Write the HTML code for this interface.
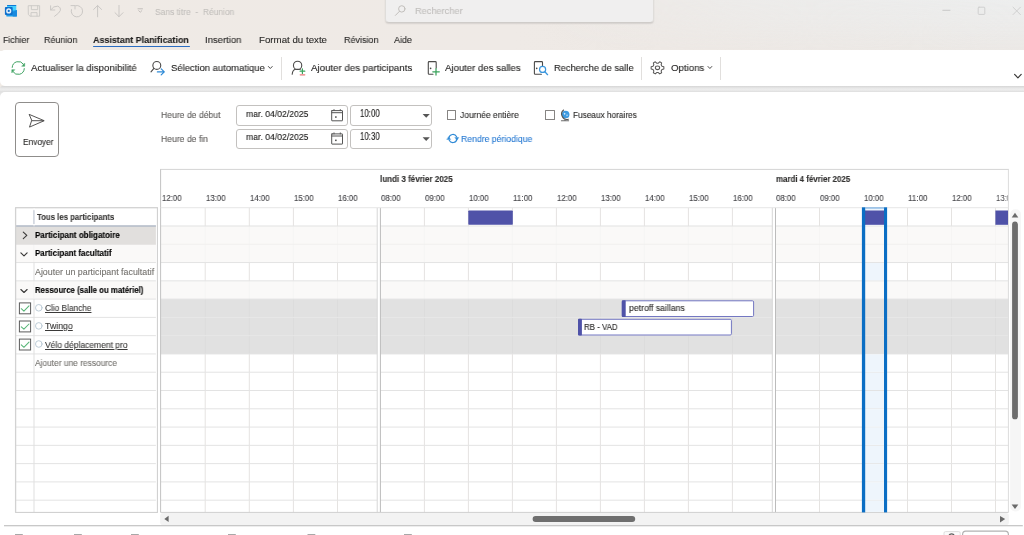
<!DOCTYPE html>
<html><head><meta charset="utf-8"><title>Sans titre - Réunion</title>
<style>
*{margin:0;padding:0;box-sizing:border-box;}
html,body{width:1024px;height:535px;overflow:hidden;background:#fff;font-family:"Liberation Sans",sans-serif;}
body{position:relative;}
.a{position:absolute;}
.t{will-change:transform;position:absolute;white-space:pre;line-height:1;transform-origin:0 0;display:inline-block;}
#title{left:0;top:0;width:1024px;height:51px;background:linear-gradient(90deg,#efeae5 0%,#efeae6 50%,#eee9e5 65%,#ece9e6 100%);}
#search{left:385.2px;top:-8px;width:268.6px;height:30.6px;border-radius:4px;background:#f0efef;border:1px solid #dfddda;border-bottom-color:#cfccc9;box-shadow:0 1px 1.5px rgba(0,0,0,.10);}
#tabul{left:93px;top:45.7px;width:96.8px;height:1.6px;background:#2a6dc2;border-radius:1px;}
#ribbon{left:0;top:50.3px;width:1024px;height:35.5px;background:#fff;border-radius:5px 0 0 5px;}
#band{left:0;top:85.8px;width:1024px;height:450px;background:linear-gradient(180deg,#d5d5d5 0px,#e3e3e3 1.6px,#ececec 3px,#ebebeb 4.2px,#e0e0e0 5.6px,#e4e4e4 7px);border-radius:3px 0 0 0;}
#bandL{left:0;top:78px;width:5px;height:10px;background:#efeae5;}
#content{left:0px;top:91.6px;width:1024px;height:445px;background:#fff;border-radius:5px 0 0 0;}
.sep{width:1px;background:#e1dfdd;top:57.2px;height:22.4px;}
#send{left:15.4px;top:102.4px;width:43.2px;height:54.8px;border:1px solid #8f8d8b;border-radius:4px;background:#fff;}
.inp{border:1px solid #c3c1bf;border-radius:3px;background:#fff;height:20.2px;}
.cb{width:9.7px;height:9.6px;border:1px solid #868482;background:#fff;border-radius:0.5px;}
svg{position:absolute;overflow:visible;}

.r{-webkit-text-stroke:0.12px currentColor;}
#titleR{left:540px;top:0;width:484px;height:51px;background:linear-gradient(180deg,rgba(236,237,237,1) 0%,rgba(236,237,237,.75) 40%,rgba(236,237,237,0) 100%);-webkit-mask-image:linear-gradient(90deg,transparent 0%,rgba(0,0,0,.55) 40%,#000 100%);mask-image:linear-gradient(90deg,transparent 0%,rgba(0,0,0,.55) 40%,#000 100%);}
.t{text-decoration-thickness:0.8px;text-underline-offset:1.2px;}
.b{-webkit-text-stroke:0.12px currentColor;}

</style></head>
<body>
<div class="a" id="title"></div>
<div class="a" id="titleR"></div>
<div class="a" id="search"></div>
<div class="a" id="tabul"></div>
<div class="a" id="bandL"></div>
<div class="a" id="ribbon"></div>
<div class="a" id="band"></div>
<div class="a" id="content"></div>
<div class="a sep" style="left:281px"></div>
<div class="a sep" style="left:641.2px"></div>
<div class="a sep" style="left:720.2px"></div>
<div class="a" id="send"></div>
<div class="a inp" style="left:236.2px;top:105.4px;width:111.4px"></div>
<div class="a inp" style="left:236.2px;top:128.7px;width:111.4px"></div>
<div class="a inp" style="left:350.4px;top:105.4px;width:81.8px"></div>
<div class="a inp" style="left:350.4px;top:128.7px;width:81.8px"></div>
<div class="a cb" style="left:446.8px;top:110.4px"></div>
<div class="a cb" style="left:545.4px;top:110.4px"></div>
<svg width="1024" height="535" viewBox="0 0 1024 535" style="left:0;top:0">
<rect x="160.60" y="225.98" width="847.80" height="18.30" fill="#faf9f8" />
<rect x="160.60" y="244.26" width="847.80" height="18.30" fill="#faf9f8" />
<rect x="160.60" y="280.82" width="847.80" height="18.30" fill="#faf9f8" />
<rect x="160.60" y="299.10" width="847.80" height="18.30" fill="#e1e1e1" />
<rect x="160.60" y="317.38" width="847.80" height="18.30" fill="#e1e1e1" />
<rect x="160.60" y="335.66" width="847.80" height="18.30" fill="#e1e1e1" />
<rect x="204.70" y="207.70" width="1" height="18.28" fill="#e5e3e1"/>
<rect x="248.80" y="207.70" width="1" height="18.28" fill="#e5e3e1"/>
<rect x="292.90" y="207.70" width="1" height="18.28" fill="#e5e3e1"/>
<rect x="337.00" y="207.70" width="1" height="18.28" fill="#e5e3e1"/>
<rect x="423.90" y="207.70" width="1" height="18.28" fill="#e5e3e1"/>
<rect x="467.90" y="207.70" width="1" height="18.28" fill="#e5e3e1"/>
<rect x="511.90" y="207.70" width="1" height="18.28" fill="#e5e3e1"/>
<rect x="555.90" y="207.70" width="1" height="18.28" fill="#e5e3e1"/>
<rect x="599.90" y="207.70" width="1" height="18.28" fill="#e5e3e1"/>
<rect x="643.90" y="207.70" width="1" height="18.28" fill="#e5e3e1"/>
<rect x="687.90" y="207.70" width="1" height="18.28" fill="#e5e3e1"/>
<rect x="731.90" y="207.70" width="1" height="18.28" fill="#e5e3e1"/>
<rect x="819.00" y="207.70" width="1" height="18.28" fill="#e5e3e1"/>
<rect x="863.00" y="207.70" width="1" height="18.28" fill="#e5e3e1"/>
<rect x="907.00" y="207.70" width="1" height="18.28" fill="#e5e3e1"/>
<rect x="951.00" y="207.70" width="1" height="18.28" fill="#e5e3e1"/>
<rect x="995.00" y="207.70" width="1" height="18.28" fill="#e5e3e1"/>
<rect x="204.70" y="225.98" width="1" height="18.28" fill="#f6f5f4"/>
<rect x="248.80" y="225.98" width="1" height="18.28" fill="#f6f5f4"/>
<rect x="292.90" y="225.98" width="1" height="18.28" fill="#f6f5f4"/>
<rect x="337.00" y="225.98" width="1" height="18.28" fill="#f6f5f4"/>
<rect x="423.90" y="225.98" width="1" height="18.28" fill="#f6f5f4"/>
<rect x="467.90" y="225.98" width="1" height="18.28" fill="#f6f5f4"/>
<rect x="511.90" y="225.98" width="1" height="18.28" fill="#f6f5f4"/>
<rect x="555.90" y="225.98" width="1" height="18.28" fill="#f6f5f4"/>
<rect x="599.90" y="225.98" width="1" height="18.28" fill="#f6f5f4"/>
<rect x="643.90" y="225.98" width="1" height="18.28" fill="#f6f5f4"/>
<rect x="687.90" y="225.98" width="1" height="18.28" fill="#f6f5f4"/>
<rect x="731.90" y="225.98" width="1" height="18.28" fill="#f6f5f4"/>
<rect x="819.00" y="225.98" width="1" height="18.28" fill="#f6f5f4"/>
<rect x="863.00" y="225.98" width="1" height="18.28" fill="#f6f5f4"/>
<rect x="907.00" y="225.98" width="1" height="18.28" fill="#f6f5f4"/>
<rect x="951.00" y="225.98" width="1" height="18.28" fill="#f6f5f4"/>
<rect x="995.00" y="225.98" width="1" height="18.28" fill="#f6f5f4"/>
<rect x="204.70" y="244.26" width="1" height="18.28" fill="#f6f5f4"/>
<rect x="248.80" y="244.26" width="1" height="18.28" fill="#f6f5f4"/>
<rect x="292.90" y="244.26" width="1" height="18.28" fill="#f6f5f4"/>
<rect x="337.00" y="244.26" width="1" height="18.28" fill="#f6f5f4"/>
<rect x="423.90" y="244.26" width="1" height="18.28" fill="#f6f5f4"/>
<rect x="467.90" y="244.26" width="1" height="18.28" fill="#f6f5f4"/>
<rect x="511.90" y="244.26" width="1" height="18.28" fill="#f6f5f4"/>
<rect x="555.90" y="244.26" width="1" height="18.28" fill="#f6f5f4"/>
<rect x="599.90" y="244.26" width="1" height="18.28" fill="#f6f5f4"/>
<rect x="643.90" y="244.26" width="1" height="18.28" fill="#f6f5f4"/>
<rect x="687.90" y="244.26" width="1" height="18.28" fill="#f6f5f4"/>
<rect x="731.90" y="244.26" width="1" height="18.28" fill="#f6f5f4"/>
<rect x="819.00" y="244.26" width="1" height="18.28" fill="#f6f5f4"/>
<rect x="863.00" y="244.26" width="1" height="18.28" fill="#f6f5f4"/>
<rect x="907.00" y="244.26" width="1" height="18.28" fill="#f6f5f4"/>
<rect x="951.00" y="244.26" width="1" height="18.28" fill="#f6f5f4"/>
<rect x="995.00" y="244.26" width="1" height="18.28" fill="#f6f5f4"/>
<rect x="204.70" y="262.54" width="1" height="18.28" fill="#e5e3e1"/>
<rect x="248.80" y="262.54" width="1" height="18.28" fill="#e5e3e1"/>
<rect x="292.90" y="262.54" width="1" height="18.28" fill="#e5e3e1"/>
<rect x="337.00" y="262.54" width="1" height="18.28" fill="#e5e3e1"/>
<rect x="423.90" y="262.54" width="1" height="18.28" fill="#e5e3e1"/>
<rect x="467.90" y="262.54" width="1" height="18.28" fill="#e5e3e1"/>
<rect x="511.90" y="262.54" width="1" height="18.28" fill="#e5e3e1"/>
<rect x="555.90" y="262.54" width="1" height="18.28" fill="#e5e3e1"/>
<rect x="599.90" y="262.54" width="1" height="18.28" fill="#e5e3e1"/>
<rect x="643.90" y="262.54" width="1" height="18.28" fill="#e5e3e1"/>
<rect x="687.90" y="262.54" width="1" height="18.28" fill="#e5e3e1"/>
<rect x="731.90" y="262.54" width="1" height="18.28" fill="#e5e3e1"/>
<rect x="819.00" y="262.54" width="1" height="18.28" fill="#e5e3e1"/>
<rect x="863.00" y="262.54" width="1" height="18.28" fill="#e5e3e1"/>
<rect x="907.00" y="262.54" width="1" height="18.28" fill="#e5e3e1"/>
<rect x="951.00" y="262.54" width="1" height="18.28" fill="#e5e3e1"/>
<rect x="995.00" y="262.54" width="1" height="18.28" fill="#e5e3e1"/>
<rect x="204.70" y="280.82" width="1" height="18.28" fill="#f6f5f4"/>
<rect x="248.80" y="280.82" width="1" height="18.28" fill="#f6f5f4"/>
<rect x="292.90" y="280.82" width="1" height="18.28" fill="#f6f5f4"/>
<rect x="337.00" y="280.82" width="1" height="18.28" fill="#f6f5f4"/>
<rect x="423.90" y="280.82" width="1" height="18.28" fill="#f6f5f4"/>
<rect x="467.90" y="280.82" width="1" height="18.28" fill="#f6f5f4"/>
<rect x="511.90" y="280.82" width="1" height="18.28" fill="#f6f5f4"/>
<rect x="555.90" y="280.82" width="1" height="18.28" fill="#f6f5f4"/>
<rect x="599.90" y="280.82" width="1" height="18.28" fill="#f6f5f4"/>
<rect x="643.90" y="280.82" width="1" height="18.28" fill="#f6f5f4"/>
<rect x="687.90" y="280.82" width="1" height="18.28" fill="#f6f5f4"/>
<rect x="731.90" y="280.82" width="1" height="18.28" fill="#f6f5f4"/>
<rect x="819.00" y="280.82" width="1" height="18.28" fill="#f6f5f4"/>
<rect x="863.00" y="280.82" width="1" height="18.28" fill="#f6f5f4"/>
<rect x="907.00" y="280.82" width="1" height="18.28" fill="#f6f5f4"/>
<rect x="951.00" y="280.82" width="1" height="18.28" fill="#f6f5f4"/>
<rect x="995.00" y="280.82" width="1" height="18.28" fill="#f6f5f4"/>
<rect x="204.70" y="299.10" width="1" height="18.28" fill="#dcdcdc"/>
<rect x="248.80" y="299.10" width="1" height="18.28" fill="#dcdcdc"/>
<rect x="292.90" y="299.10" width="1" height="18.28" fill="#dcdcdc"/>
<rect x="337.00" y="299.10" width="1" height="18.28" fill="#dcdcdc"/>
<rect x="423.90" y="299.10" width="1" height="18.28" fill="#dcdcdc"/>
<rect x="467.90" y="299.10" width="1" height="18.28" fill="#dcdcdc"/>
<rect x="511.90" y="299.10" width="1" height="18.28" fill="#dcdcdc"/>
<rect x="555.90" y="299.10" width="1" height="18.28" fill="#dcdcdc"/>
<rect x="599.90" y="299.10" width="1" height="18.28" fill="#dcdcdc"/>
<rect x="643.90" y="299.10" width="1" height="18.28" fill="#dcdcdc"/>
<rect x="687.90" y="299.10" width="1" height="18.28" fill="#dcdcdc"/>
<rect x="731.90" y="299.10" width="1" height="18.28" fill="#dcdcdc"/>
<rect x="819.00" y="299.10" width="1" height="18.28" fill="#dcdcdc"/>
<rect x="863.00" y="299.10" width="1" height="18.28" fill="#dcdcdc"/>
<rect x="907.00" y="299.10" width="1" height="18.28" fill="#dcdcdc"/>
<rect x="951.00" y="299.10" width="1" height="18.28" fill="#dcdcdc"/>
<rect x="995.00" y="299.10" width="1" height="18.28" fill="#dcdcdc"/>
<rect x="204.70" y="317.38" width="1" height="18.28" fill="#dcdcdc"/>
<rect x="248.80" y="317.38" width="1" height="18.28" fill="#dcdcdc"/>
<rect x="292.90" y="317.38" width="1" height="18.28" fill="#dcdcdc"/>
<rect x="337.00" y="317.38" width="1" height="18.28" fill="#dcdcdc"/>
<rect x="423.90" y="317.38" width="1" height="18.28" fill="#dcdcdc"/>
<rect x="467.90" y="317.38" width="1" height="18.28" fill="#dcdcdc"/>
<rect x="511.90" y="317.38" width="1" height="18.28" fill="#dcdcdc"/>
<rect x="555.90" y="317.38" width="1" height="18.28" fill="#dcdcdc"/>
<rect x="599.90" y="317.38" width="1" height="18.28" fill="#dcdcdc"/>
<rect x="643.90" y="317.38" width="1" height="18.28" fill="#dcdcdc"/>
<rect x="687.90" y="317.38" width="1" height="18.28" fill="#dcdcdc"/>
<rect x="731.90" y="317.38" width="1" height="18.28" fill="#dcdcdc"/>
<rect x="819.00" y="317.38" width="1" height="18.28" fill="#dcdcdc"/>
<rect x="863.00" y="317.38" width="1" height="18.28" fill="#dcdcdc"/>
<rect x="907.00" y="317.38" width="1" height="18.28" fill="#dcdcdc"/>
<rect x="951.00" y="317.38" width="1" height="18.28" fill="#dcdcdc"/>
<rect x="995.00" y="317.38" width="1" height="18.28" fill="#dcdcdc"/>
<rect x="204.70" y="335.66" width="1" height="18.28" fill="#dcdcdc"/>
<rect x="248.80" y="335.66" width="1" height="18.28" fill="#dcdcdc"/>
<rect x="292.90" y="335.66" width="1" height="18.28" fill="#dcdcdc"/>
<rect x="337.00" y="335.66" width="1" height="18.28" fill="#dcdcdc"/>
<rect x="423.90" y="335.66" width="1" height="18.28" fill="#dcdcdc"/>
<rect x="467.90" y="335.66" width="1" height="18.28" fill="#dcdcdc"/>
<rect x="511.90" y="335.66" width="1" height="18.28" fill="#dcdcdc"/>
<rect x="555.90" y="335.66" width="1" height="18.28" fill="#dcdcdc"/>
<rect x="599.90" y="335.66" width="1" height="18.28" fill="#dcdcdc"/>
<rect x="643.90" y="335.66" width="1" height="18.28" fill="#dcdcdc"/>
<rect x="687.90" y="335.66" width="1" height="18.28" fill="#dcdcdc"/>
<rect x="731.90" y="335.66" width="1" height="18.28" fill="#dcdcdc"/>
<rect x="819.00" y="335.66" width="1" height="18.28" fill="#dcdcdc"/>
<rect x="863.00" y="335.66" width="1" height="18.28" fill="#dcdcdc"/>
<rect x="907.00" y="335.66" width="1" height="18.28" fill="#dcdcdc"/>
<rect x="951.00" y="335.66" width="1" height="18.28" fill="#dcdcdc"/>
<rect x="995.00" y="335.66" width="1" height="18.28" fill="#dcdcdc"/>
<rect x="204.70" y="353.94" width="1" height="18.28" fill="#e5e3e1"/>
<rect x="248.80" y="353.94" width="1" height="18.28" fill="#e5e3e1"/>
<rect x="292.90" y="353.94" width="1" height="18.28" fill="#e5e3e1"/>
<rect x="337.00" y="353.94" width="1" height="18.28" fill="#e5e3e1"/>
<rect x="423.90" y="353.94" width="1" height="18.28" fill="#e5e3e1"/>
<rect x="467.90" y="353.94" width="1" height="18.28" fill="#e5e3e1"/>
<rect x="511.90" y="353.94" width="1" height="18.28" fill="#e5e3e1"/>
<rect x="555.90" y="353.94" width="1" height="18.28" fill="#e5e3e1"/>
<rect x="599.90" y="353.94" width="1" height="18.28" fill="#e5e3e1"/>
<rect x="643.90" y="353.94" width="1" height="18.28" fill="#e5e3e1"/>
<rect x="687.90" y="353.94" width="1" height="18.28" fill="#e5e3e1"/>
<rect x="731.90" y="353.94" width="1" height="18.28" fill="#e5e3e1"/>
<rect x="819.00" y="353.94" width="1" height="18.28" fill="#e5e3e1"/>
<rect x="863.00" y="353.94" width="1" height="18.28" fill="#e5e3e1"/>
<rect x="907.00" y="353.94" width="1" height="18.28" fill="#e5e3e1"/>
<rect x="951.00" y="353.94" width="1" height="18.28" fill="#e5e3e1"/>
<rect x="995.00" y="353.94" width="1" height="18.28" fill="#e5e3e1"/>
<rect x="204.70" y="372.22" width="1" height="18.28" fill="#e5e3e1"/>
<rect x="248.80" y="372.22" width="1" height="18.28" fill="#e5e3e1"/>
<rect x="292.90" y="372.22" width="1" height="18.28" fill="#e5e3e1"/>
<rect x="337.00" y="372.22" width="1" height="18.28" fill="#e5e3e1"/>
<rect x="423.90" y="372.22" width="1" height="18.28" fill="#e5e3e1"/>
<rect x="467.90" y="372.22" width="1" height="18.28" fill="#e5e3e1"/>
<rect x="511.90" y="372.22" width="1" height="18.28" fill="#e5e3e1"/>
<rect x="555.90" y="372.22" width="1" height="18.28" fill="#e5e3e1"/>
<rect x="599.90" y="372.22" width="1" height="18.28" fill="#e5e3e1"/>
<rect x="643.90" y="372.22" width="1" height="18.28" fill="#e5e3e1"/>
<rect x="687.90" y="372.22" width="1" height="18.28" fill="#e5e3e1"/>
<rect x="731.90" y="372.22" width="1" height="18.28" fill="#e5e3e1"/>
<rect x="819.00" y="372.22" width="1" height="18.28" fill="#e5e3e1"/>
<rect x="863.00" y="372.22" width="1" height="18.28" fill="#e5e3e1"/>
<rect x="907.00" y="372.22" width="1" height="18.28" fill="#e5e3e1"/>
<rect x="951.00" y="372.22" width="1" height="18.28" fill="#e5e3e1"/>
<rect x="995.00" y="372.22" width="1" height="18.28" fill="#e5e3e1"/>
<rect x="204.70" y="390.50" width="1" height="18.28" fill="#e5e3e1"/>
<rect x="248.80" y="390.50" width="1" height="18.28" fill="#e5e3e1"/>
<rect x="292.90" y="390.50" width="1" height="18.28" fill="#e5e3e1"/>
<rect x="337.00" y="390.50" width="1" height="18.28" fill="#e5e3e1"/>
<rect x="423.90" y="390.50" width="1" height="18.28" fill="#e5e3e1"/>
<rect x="467.90" y="390.50" width="1" height="18.28" fill="#e5e3e1"/>
<rect x="511.90" y="390.50" width="1" height="18.28" fill="#e5e3e1"/>
<rect x="555.90" y="390.50" width="1" height="18.28" fill="#e5e3e1"/>
<rect x="599.90" y="390.50" width="1" height="18.28" fill="#e5e3e1"/>
<rect x="643.90" y="390.50" width="1" height="18.28" fill="#e5e3e1"/>
<rect x="687.90" y="390.50" width="1" height="18.28" fill="#e5e3e1"/>
<rect x="731.90" y="390.50" width="1" height="18.28" fill="#e5e3e1"/>
<rect x="819.00" y="390.50" width="1" height="18.28" fill="#e5e3e1"/>
<rect x="863.00" y="390.50" width="1" height="18.28" fill="#e5e3e1"/>
<rect x="907.00" y="390.50" width="1" height="18.28" fill="#e5e3e1"/>
<rect x="951.00" y="390.50" width="1" height="18.28" fill="#e5e3e1"/>
<rect x="995.00" y="390.50" width="1" height="18.28" fill="#e5e3e1"/>
<rect x="204.70" y="408.78" width="1" height="18.28" fill="#e5e3e1"/>
<rect x="248.80" y="408.78" width="1" height="18.28" fill="#e5e3e1"/>
<rect x="292.90" y="408.78" width="1" height="18.28" fill="#e5e3e1"/>
<rect x="337.00" y="408.78" width="1" height="18.28" fill="#e5e3e1"/>
<rect x="423.90" y="408.78" width="1" height="18.28" fill="#e5e3e1"/>
<rect x="467.90" y="408.78" width="1" height="18.28" fill="#e5e3e1"/>
<rect x="511.90" y="408.78" width="1" height="18.28" fill="#e5e3e1"/>
<rect x="555.90" y="408.78" width="1" height="18.28" fill="#e5e3e1"/>
<rect x="599.90" y="408.78" width="1" height="18.28" fill="#e5e3e1"/>
<rect x="643.90" y="408.78" width="1" height="18.28" fill="#e5e3e1"/>
<rect x="687.90" y="408.78" width="1" height="18.28" fill="#e5e3e1"/>
<rect x="731.90" y="408.78" width="1" height="18.28" fill="#e5e3e1"/>
<rect x="819.00" y="408.78" width="1" height="18.28" fill="#e5e3e1"/>
<rect x="863.00" y="408.78" width="1" height="18.28" fill="#e5e3e1"/>
<rect x="907.00" y="408.78" width="1" height="18.28" fill="#e5e3e1"/>
<rect x="951.00" y="408.78" width="1" height="18.28" fill="#e5e3e1"/>
<rect x="995.00" y="408.78" width="1" height="18.28" fill="#e5e3e1"/>
<rect x="204.70" y="427.06" width="1" height="18.28" fill="#e5e3e1"/>
<rect x="248.80" y="427.06" width="1" height="18.28" fill="#e5e3e1"/>
<rect x="292.90" y="427.06" width="1" height="18.28" fill="#e5e3e1"/>
<rect x="337.00" y="427.06" width="1" height="18.28" fill="#e5e3e1"/>
<rect x="423.90" y="427.06" width="1" height="18.28" fill="#e5e3e1"/>
<rect x="467.90" y="427.06" width="1" height="18.28" fill="#e5e3e1"/>
<rect x="511.90" y="427.06" width="1" height="18.28" fill="#e5e3e1"/>
<rect x="555.90" y="427.06" width="1" height="18.28" fill="#e5e3e1"/>
<rect x="599.90" y="427.06" width="1" height="18.28" fill="#e5e3e1"/>
<rect x="643.90" y="427.06" width="1" height="18.28" fill="#e5e3e1"/>
<rect x="687.90" y="427.06" width="1" height="18.28" fill="#e5e3e1"/>
<rect x="731.90" y="427.06" width="1" height="18.28" fill="#e5e3e1"/>
<rect x="819.00" y="427.06" width="1" height="18.28" fill="#e5e3e1"/>
<rect x="863.00" y="427.06" width="1" height="18.28" fill="#e5e3e1"/>
<rect x="907.00" y="427.06" width="1" height="18.28" fill="#e5e3e1"/>
<rect x="951.00" y="427.06" width="1" height="18.28" fill="#e5e3e1"/>
<rect x="995.00" y="427.06" width="1" height="18.28" fill="#e5e3e1"/>
<rect x="204.70" y="445.34" width="1" height="18.28" fill="#e5e3e1"/>
<rect x="248.80" y="445.34" width="1" height="18.28" fill="#e5e3e1"/>
<rect x="292.90" y="445.34" width="1" height="18.28" fill="#e5e3e1"/>
<rect x="337.00" y="445.34" width="1" height="18.28" fill="#e5e3e1"/>
<rect x="423.90" y="445.34" width="1" height="18.28" fill="#e5e3e1"/>
<rect x="467.90" y="445.34" width="1" height="18.28" fill="#e5e3e1"/>
<rect x="511.90" y="445.34" width="1" height="18.28" fill="#e5e3e1"/>
<rect x="555.90" y="445.34" width="1" height="18.28" fill="#e5e3e1"/>
<rect x="599.90" y="445.34" width="1" height="18.28" fill="#e5e3e1"/>
<rect x="643.90" y="445.34" width="1" height="18.28" fill="#e5e3e1"/>
<rect x="687.90" y="445.34" width="1" height="18.28" fill="#e5e3e1"/>
<rect x="731.90" y="445.34" width="1" height="18.28" fill="#e5e3e1"/>
<rect x="819.00" y="445.34" width="1" height="18.28" fill="#e5e3e1"/>
<rect x="863.00" y="445.34" width="1" height="18.28" fill="#e5e3e1"/>
<rect x="907.00" y="445.34" width="1" height="18.28" fill="#e5e3e1"/>
<rect x="951.00" y="445.34" width="1" height="18.28" fill="#e5e3e1"/>
<rect x="995.00" y="445.34" width="1" height="18.28" fill="#e5e3e1"/>
<rect x="204.70" y="463.62" width="1" height="18.28" fill="#e5e3e1"/>
<rect x="248.80" y="463.62" width="1" height="18.28" fill="#e5e3e1"/>
<rect x="292.90" y="463.62" width="1" height="18.28" fill="#e5e3e1"/>
<rect x="337.00" y="463.62" width="1" height="18.28" fill="#e5e3e1"/>
<rect x="423.90" y="463.62" width="1" height="18.28" fill="#e5e3e1"/>
<rect x="467.90" y="463.62" width="1" height="18.28" fill="#e5e3e1"/>
<rect x="511.90" y="463.62" width="1" height="18.28" fill="#e5e3e1"/>
<rect x="555.90" y="463.62" width="1" height="18.28" fill="#e5e3e1"/>
<rect x="599.90" y="463.62" width="1" height="18.28" fill="#e5e3e1"/>
<rect x="643.90" y="463.62" width="1" height="18.28" fill="#e5e3e1"/>
<rect x="687.90" y="463.62" width="1" height="18.28" fill="#e5e3e1"/>
<rect x="731.90" y="463.62" width="1" height="18.28" fill="#e5e3e1"/>
<rect x="819.00" y="463.62" width="1" height="18.28" fill="#e5e3e1"/>
<rect x="863.00" y="463.62" width="1" height="18.28" fill="#e5e3e1"/>
<rect x="907.00" y="463.62" width="1" height="18.28" fill="#e5e3e1"/>
<rect x="951.00" y="463.62" width="1" height="18.28" fill="#e5e3e1"/>
<rect x="995.00" y="463.62" width="1" height="18.28" fill="#e5e3e1"/>
<rect x="204.70" y="481.90" width="1" height="18.28" fill="#e5e3e1"/>
<rect x="248.80" y="481.90" width="1" height="18.28" fill="#e5e3e1"/>
<rect x="292.90" y="481.90" width="1" height="18.28" fill="#e5e3e1"/>
<rect x="337.00" y="481.90" width="1" height="18.28" fill="#e5e3e1"/>
<rect x="423.90" y="481.90" width="1" height="18.28" fill="#e5e3e1"/>
<rect x="467.90" y="481.90" width="1" height="18.28" fill="#e5e3e1"/>
<rect x="511.90" y="481.90" width="1" height="18.28" fill="#e5e3e1"/>
<rect x="555.90" y="481.90" width="1" height="18.28" fill="#e5e3e1"/>
<rect x="599.90" y="481.90" width="1" height="18.28" fill="#e5e3e1"/>
<rect x="643.90" y="481.90" width="1" height="18.28" fill="#e5e3e1"/>
<rect x="687.90" y="481.90" width="1" height="18.28" fill="#e5e3e1"/>
<rect x="731.90" y="481.90" width="1" height="18.28" fill="#e5e3e1"/>
<rect x="819.00" y="481.90" width="1" height="18.28" fill="#e5e3e1"/>
<rect x="863.00" y="481.90" width="1" height="18.28" fill="#e5e3e1"/>
<rect x="907.00" y="481.90" width="1" height="18.28" fill="#e5e3e1"/>
<rect x="951.00" y="481.90" width="1" height="18.28" fill="#e5e3e1"/>
<rect x="995.00" y="481.90" width="1" height="18.28" fill="#e5e3e1"/>
<rect x="204.70" y="500.18" width="1" height="12.22" fill="#e5e3e1"/>
<rect x="248.80" y="500.18" width="1" height="12.22" fill="#e5e3e1"/>
<rect x="292.90" y="500.18" width="1" height="12.22" fill="#e5e3e1"/>
<rect x="337.00" y="500.18" width="1" height="12.22" fill="#e5e3e1"/>
<rect x="423.90" y="500.18" width="1" height="12.22" fill="#e5e3e1"/>
<rect x="467.90" y="500.18" width="1" height="12.22" fill="#e5e3e1"/>
<rect x="511.90" y="500.18" width="1" height="12.22" fill="#e5e3e1"/>
<rect x="555.90" y="500.18" width="1" height="12.22" fill="#e5e3e1"/>
<rect x="599.90" y="500.18" width="1" height="12.22" fill="#e5e3e1"/>
<rect x="643.90" y="500.18" width="1" height="12.22" fill="#e5e3e1"/>
<rect x="687.90" y="500.18" width="1" height="12.22" fill="#e5e3e1"/>
<rect x="731.90" y="500.18" width="1" height="12.22" fill="#e5e3e1"/>
<rect x="819.00" y="500.18" width="1" height="12.22" fill="#e5e3e1"/>
<rect x="863.00" y="500.18" width="1" height="12.22" fill="#e5e3e1"/>
<rect x="907.00" y="500.18" width="1" height="12.22" fill="#e5e3e1"/>
<rect x="951.00" y="500.18" width="1" height="12.22" fill="#e5e3e1"/>
<rect x="995.00" y="500.18" width="1" height="12.22" fill="#e5e3e1"/>
<rect x="160.60" y="225.48" width="847.80" height="1" fill="#e3e3e3"/>
<rect x="160.60" y="243.76" width="847.80" height="1" fill="#f1f0ef"/>
<rect x="160.60" y="262.04" width="847.80" height="1" fill="#e3e3e3"/>
<rect x="160.60" y="280.32" width="847.80" height="1" fill="#e3e3e3"/>
<rect x="160.60" y="298.60" width="847.80" height="1" fill="#e3e3e3"/>
<rect x="160.60" y="316.88" width="847.80" height="1" fill="#e7e7e7"/>
<rect x="160.60" y="335.16" width="847.80" height="1" fill="#e7e7e7"/>
<rect x="160.60" y="353.44" width="847.80" height="1" fill="#e3e3e3"/>
<rect x="160.60" y="371.72" width="847.80" height="1" fill="#e3e3e3"/>
<rect x="160.60" y="390.00" width="847.80" height="1" fill="#e3e3e3"/>
<rect x="160.60" y="408.28" width="847.80" height="1" fill="#e3e3e3"/>
<rect x="160.60" y="426.56" width="847.80" height="1" fill="#e3e3e3"/>
<rect x="160.60" y="444.84" width="847.80" height="1" fill="#e3e3e3"/>
<rect x="160.60" y="463.12" width="847.80" height="1" fill="#e3e3e3"/>
<rect x="160.60" y="481.40" width="847.80" height="1" fill="#e3e3e3"/>
<rect x="160.60" y="499.68" width="847.80" height="1" fill="#e3e3e3"/>
<rect x="377.20" y="207.70" width="3.20" height="304.70" fill="#ffffff" />
<rect x="376.70" y="207.70" width="1" height="304.70" fill="#d6d6d6"/>
<rect x="379.90" y="207.70" width="1" height="304.70" fill="#bcbcbc"/>
<rect x="772.30" y="207.70" width="3.20" height="304.70" fill="#ffffff" />
<rect x="771.80" y="207.70" width="1" height="304.70" fill="#d6d6d6"/>
<rect x="775.00" y="207.70" width="1" height="304.70" fill="#bcbcbc"/>
<rect x="160.10" y="168.90" width="848.80" height="1" fill="#d4d4d4"/>
<rect x="160.10" y="169.40" width="1" height="343.00" fill="#c2c2c2"/>
<rect x="1007.90" y="169.40" width="1" height="343.00" fill="#dcdcdc"/>
<rect x="160.60" y="207.20" width="847.80" height="1" fill="#e6e6e6"/>
<rect x="160.60" y="511.90" width="847.80" height="1" fill="#d0d0d0"/>
<rect x="468.30" y="210.50" width="44.50" height="14.30" fill="#4f52a8" rx="0.8"/>
<rect x="865.00" y="210.50" width="19.20" height="14.30" fill="#4f52a8" />
<rect x="995.40" y="210.50" width="12.60" height="14.30" fill="#4f52a8" />
<rect x="865.20" y="208.20" width="18.90" height="17.28" fill="#eef5fc" />
<rect x="865.20" y="263.04" width="18.90" height="17.28" fill="#eef5fc" />
<rect x="865.20" y="354.44" width="18.90" height="17.28" fill="#eef5fc" />
<rect x="865.20" y="372.72" width="18.90" height="17.28" fill="#eef5fc" />
<rect x="865.20" y="391.00" width="18.90" height="17.28" fill="#eef5fc" />
<rect x="865.20" y="409.28" width="18.90" height="17.28" fill="#eef5fc" />
<rect x="865.20" y="427.56" width="18.90" height="17.28" fill="#eef5fc" />
<rect x="865.20" y="445.84" width="18.90" height="17.28" fill="#eef5fc" />
<rect x="865.20" y="464.12" width="18.90" height="17.28" fill="#eef5fc" />
<rect x="865.20" y="482.40" width="18.90" height="17.28" fill="#eef5fc" />
<rect x="865.20" y="500.68" width="18.90" height="11.22" fill="#eef5fc" />
<rect x="865.00" y="210.50" width="19.20" height="14.30" fill="#4f52a8" />
<rect x="861.90" y="207.30" width="3.30" height="305.10" fill="#0b6ec4" />
<rect x="884.00" y="207.30" width="3.10" height="305.10" fill="#0b6ec4" />
<rect x="865.00" y="207.30" width="19.20" height="1.30" fill="#7fb2e3" />
<rect x="622.30" y="300.80" width="131.30" height="15.70" fill="#ffffff" stroke="#7377c2" stroke-width="1" rx="1.2"/>
<rect x="621.80" y="300.30" width="3.90" height="16.70" fill="#4f52a8" rx="0.8"/>
<rect x="578.50" y="319.30" width="152.90" height="15.70" fill="#ffffff" stroke="#7377c2" stroke-width="1" rx="1.2"/>
<rect x="578.00" y="318.80" width="3.90" height="16.70" fill="#4f52a8" rx="0.8"/>
<rect x="15.60" y="207.70" width="141.80" height="304.70" fill="#ffffff" />
<rect x="15.60" y="225.98" width="140.30" height="18.28" fill="#e1dfdd" />
<rect x="15.60" y="244.26" width="140.30" height="18.28" fill="#faf9f8" />
<rect x="15.60" y="280.82" width="140.30" height="18.28" fill="#faf9f8" />
<rect x="15.60" y="225.48" width="140.30" height="1" fill="#b2bbc8"/>
<rect x="15.60" y="243.76" width="140.30" height="1" fill="#e1dfdd"/>
<rect x="15.60" y="262.04" width="140.30" height="1" fill="#e3e3e3"/>
<rect x="15.60" y="280.32" width="140.30" height="1" fill="#e3e3e3"/>
<rect x="15.60" y="298.60" width="140.30" height="1" fill="#e3e3e3"/>
<rect x="15.60" y="316.88" width="140.30" height="1" fill="#e3e3e3"/>
<rect x="15.60" y="335.16" width="140.30" height="1" fill="#e3e3e3"/>
<rect x="15.60" y="353.44" width="140.30" height="1" fill="#e3e3e3"/>
<rect x="15.60" y="371.72" width="140.30" height="1" fill="#e3e3e3"/>
<rect x="15.60" y="390.00" width="140.30" height="1" fill="#e3e3e3"/>
<rect x="15.60" y="408.28" width="140.30" height="1" fill="#e3e3e3"/>
<rect x="15.60" y="426.56" width="140.30" height="1" fill="#e3e3e3"/>
<rect x="15.60" y="444.84" width="140.30" height="1" fill="#e3e3e3"/>
<rect x="15.60" y="463.12" width="140.30" height="1" fill="#e3e3e3"/>
<rect x="15.60" y="481.40" width="140.30" height="1" fill="#e3e3e3"/>
<rect x="15.60" y="499.68" width="140.30" height="1" fill="#e3e3e3"/>
<rect x="33.50" y="207.70" width="1" height="304.70" fill="#e0e0e0"/>
<rect x="33.30" y="226.58" width="1.50" height="17.18" fill="#e1dfdd" />
<rect x="33.30" y="244.86" width="1.50" height="17.18" fill="#faf9f8" />
<rect x="33.30" y="281.42" width="1.50" height="17.18" fill="#faf9f8" />
<rect x="15.60" y="225.48" width="140.30" height="1" fill="#b2bbc8"/>
<rect x="15.10" y="207.05" width="142.80" height="1.3" fill="#d2d2d2"/>
<rect x="15.10" y="511.90" width="142.80" height="1" fill="#cdcdcd"/>
<rect x="14.95" y="207.70" width="1.3" height="304.70" fill="#d2d2d2"/>
<rect x="156.90" y="207.70" width="1" height="304.70" fill="#cdcdcd"/>
<rect x="33.20" y="208.30" width="1.70" height="17.08" fill="#ffffff" />
<rect x="33.10" y="210.20" width="1.6" height="13.80" fill="#d0d5de"/>
<rect x="1010.20" y="209.20" width="10.80" height="302.20" fill="#f6f6f6" rx="5"/>
<rect x="1012.10" y="221.60" width="5.80" height="197.70" fill="#6d6d6d" rx="2.9"/>
<path d="M1011.7 217.6 L1015 212.8 L1018.3 217.6 Z" fill="#6a6a6a"/>
<path d="M1011.6 504.5 L1015 509.1 L1018.3 504.5 Z" fill="#6a6a6a"/>
<rect x="160.10" y="512.90" width="848.80" height="12.40" fill="#f3f3f3" rx="3"/>
<rect x="532.60" y="515.90" width="102.60" height="6.10" fill="#6f6f6f" rx="3"/>
<path d="M168.6 515.8 L164.3 518.9 L168.6 522 Z" fill="#6a6a6a"/>
<path d="M1000 515.9 L1005.2 519.1 L1000 522.4 Z" fill="#6a6a6a"/>
<rect x="4.00" y="525.10" width="1018.80" height="1.2" fill="#c2c2c2"/>
<rect x="15.00" y="534.00" width="7.80" height="1.50" fill="#a8a8a8" />
<rect x="74.00" y="534.00" width="7.80" height="1.50" fill="#a8a8a8" />
<rect x="131.00" y="534.00" width="7.80" height="1.50" fill="#a8a8a8" />
<rect x="228.00" y="534.00" width="7.80" height="1.50" fill="#a8a8a8" />
<rect x="307.50" y="534.00" width="7.80" height="1.50" fill="#a8a8a8" />
<rect x="404.00" y="534.00" width="7.80" height="1.50" fill="#a8a8a8" />
<rect x="962.60" y="531.20" width="45.80" height="8.00" fill="#ffffff" stroke="#b2b2b2" stroke-width="1.2" rx="3.2"/>
<rect x="944.00" y="531.60" width="16.20" height="8.00" fill="#fbfbfb" stroke="#dedede" stroke-width="1" rx="1.5"/>
<circle cx="951.6" cy="536.4" r="2.6" fill="none" stroke="#5a5a5a" stroke-width="1.3"/>
</svg>
<svg width="1024" height="535" viewBox="0 0 1024 535" style="left:0;top:0" fill="none" stroke-linecap="round" stroke-linejoin="round">
<!-- outlook logo -->
<g stroke="none">
<rect x="7" y="5" width="9.3" height="6.4" rx="0.7" fill="#45d0ff"/>
<path d="M7.7 5 H15.6 Q16.3 5 16.3 5.7 V6.1 H7 V5.7 Q7 5 7.7 5 Z" fill="#0f7ad6"/>
<path d="M12 10.7 L16.9 10 V15.9 Q16.9 16.6 16.2 16.6 H7 Q6.3 16.6 6.3 15.9 V14 Z" fill="#1b9be8"/>
<path d="M12.7 12.2 L16.9 10 V15.9 Q16.9 16.6 16.2 16.6 H12.7 Z" fill="#1a8ade"/>
<rect x="4.9" y="7" width="7.8" height="8" rx="0.9" fill="#1070cc"/>
<circle cx="8.75" cy="10.95" r="1.85" fill="none" stroke="#e3f0fa" stroke-width="1.45"/>
</g>
<!-- quick access (disabled grey) -->
<g stroke="#cbc8c5" stroke-width="1">
<path d="M28.6 5.7 H39.6 V16.2 H30 L28.6 14.8 Z" stroke-width="0.9"/>
<path d="M31.4 5.9 V9.6 H37.7 V5.9" stroke-width="0.9"/>
<path d="M31 16 V12.6 H37 V16" stroke-width="0.9"/>
<!-- undo -->
<path d="M50.6 5.8 V10 H54.8"/>
<path d="M50.8 9.8 Q53.6 5.6 57.6 6.2 Q61 7.2 60.3 10.6 Q59.6 12.8 54.6 16.3"/>
<!-- redo -->
<path d="M71 5.6 H75 V9"/>
<path d="M75.6 5.6 A5.7 5.7 0 1 1 71.4 9.6"/>
<!-- arrows -->
<path d="M97.6 16.8 V5.6 M93.6 9.5 L97.6 5.5 L101.6 9.5"/>
<path d="M119 5.4 V16.6 M115 12.7 L119 16.7 L123 12.7"/>
<path d="M138 8.8 H142.5 M138.7 10.7 L140.25 12.2 L141.8 10.7" stroke="#bdbab7" stroke-width="0.9"/>
<!-- window controls -->
<path d="M942.8 10.3 H950" stroke="#c9c9c9"/>
<rect x="978.2" y="7.2" width="6.6" height="7.2" rx="0.8" stroke="#cfcfcf"/>
<path d="M1013 7.2 L1020.4 14.6 M1020.4 7.2 L1013 14.6" stroke="#cfcfcf"/>
<!-- search glyph -->
<circle cx="401.8" cy="8.9" r="3.2" stroke="#c2bfbc"/>
<path d="M399.5 11.3 L395.4 15.4" stroke="#c2bfbc"/>
</g>
<!-- ribbon: refresh -->
<g stroke="#3fa363" stroke-width="1">
<path d="M12.2 67.4 A6.2 6.2 0 0 1 23.6 64.4"/>
<path d="M24.3 68.6 A6.2 6.2 0 0 1 12.9 71.6"/>
<path d="M24.7 63.4 V66.3 H22 Z" fill="#3fa363" stroke-width="0.5"/>
<path d="M11.8 72.6 V69.7 H14.5 Z" fill="#3fa363" stroke-width="0.5"/>
</g>
<!-- ribbon: selection auto -->
<g stroke="#4b4a49" stroke-width="1.1">
<circle cx="156.8" cy="65.4" r="3.95"/>
<path d="M153.9 68.4 L151 71.8"/>
<path d="M157.4 71.9 H164 M161.2 68.9 L164.3 71.9 L161.2 74.9" stroke="#2f8ad6" stroke-width="1.25"/>
</g>
<path d="M268.4 66.5 L270.3 68.5 L272.2 66.5" stroke="#4b4a49" stroke-width="1"/>
<!-- ribbon: add participants -->
<g stroke="#4b4a49" stroke-width="1.1">
<circle cx="297.6" cy="65.4" r="4.15"/>
<path d="M300.4 69.3 H295.6 Q292.6 69.8 292.2 74.2"/>
<path d="M302.4 68.9 V73.4 M300.1 71.2 H304.8" stroke="#3aa35c" stroke-width="1.2"/>
<path d="M300.2 74.8 H304.8" stroke="#e8787a" stroke-width="1.2"/>
</g>
<!-- ribbon: add room -->
<g stroke="#4b4a49" stroke-width="1.1">
<path d="M436.2 68 V62.4 Q436.2 61.6 435.4 61.6 H429.1 Q428.3 61.6 428.3 62.4 V73.5 Q428.3 74.3 429.1 74.3 H433"/>
<circle cx="430.6" cy="68.3" r="0.85" fill="#4b4a49" stroke="none"/>
<path d="M436 68.6 V75 M432.8 71.8 H439.3" stroke="#3aa35c" stroke-width="1.25"/>
</g>
<!-- ribbon: room search -->
<g stroke="#4b4a49" stroke-width="1.1">
<path d="M542.5 65.8 V62.4 Q542.5 61.6 541.7 61.6 H535.2 Q534.4 61.6 534.4 62.4 V73.5 Q534.4 74.3 535.2 74.3 H541.4"/>
<circle cx="536.7" cy="68.3" r="0.85" fill="#4b4a49" stroke="none"/>
<circle cx="542.6" cy="69.4" r="3.05" stroke="#3a96dd" stroke-width="1.2" fill="#fff"/>
<path d="M544.9 71.8 L547.6 74.7" stroke="#3a96dd" stroke-width="1.25"/>
</g>
<!-- ribbon: gear -->
<g stroke="#5a5958" stroke-width="1.05">
<ellipse cx="657.5" cy="67.85" rx="2.15" ry="1.8"/>
<path d="M661.96 66.23 L663.85 66.73 L663.85 68.97 L661.96 69.47 L661.14 70.90 L661.65 72.79 L659.71 73.91 L658.32 72.53 L656.68 72.53 L655.29 73.91 L653.35 72.79 L653.86 70.90 L653.04 69.47 L651.15 68.97 L651.15 66.73 L653.04 66.23 L653.86 64.80 L653.35 62.91 L655.29 61.79 L656.68 63.17 L658.32 63.17 L659.71 61.79 L661.65 62.91 L661.14 64.80 Z"/>
</g>
<path d="M708 66.5 L709.9 68.5 L711.8 66.5" stroke="#4b4a49" stroke-width="1"/>
<path d="M1014.6 74.4 L1017.9 77.8 L1021.2 74.4" stroke="#3b3a39" stroke-width="1.2"/>
<!-- send -->
<path d="M29.5 114.5 L44.2 120.7 L29.5 127.1 L31.6 120.7 Z M31.8 120.7 H43.5" stroke="#4b4a49" stroke-width="0.95"/>
<!-- calendar icons -->
<g stroke="#555" stroke-width="1">
<rect x="331.7" y="110.6" width="10.8" height="10.2" rx="0.3"/>
<path d="M331.8 112.7 H342.4 M334 109.6 V110.6 M340.3 109.6 V110.6"/>
<rect x="335.1" y="116.3" width="1.5" height="1.5" fill="#444" stroke="none"/>
</g>
<g transform="translate(0,23.3)" stroke="#555" stroke-width="1">
<rect x="331.7" y="110.6" width="10.8" height="10.2" rx="0.3"/>
<path d="M331.8 112.7 H342.4 M334 109.6 V110.6 M340.3 109.6 V110.6"/>
<rect x="335.1" y="116.3" width="1.5" height="1.5" fill="#444" stroke="none"/>
</g>
<!-- dropdown arrows -->
<path d="M422.6 113.9 H429.8 L426.2 117.7 Z" fill="#555" stroke="none"/>
<path d="M422.6 137.2 H429.8 L426.2 141 Z" fill="#555" stroke="none"/>
<!-- recurrence -->
<g stroke="#2f8ad6" stroke-width="1.15">
<path d="M448.9 137.9 A4.1 4.1 0 0 1 456.6 136.7"/>
<path d="M456.9 139.1 A4.1 4.1 0 0 1 449.2 140.3"/>
<path d="M455.2 137.6 H458.7 L457 139.9 Z" fill="#2f8ad6" stroke-width="0.5"/>
<path d="M447.1 139.4 H450.6 L448.8 137.1 Z" fill="#2f8ad6" stroke-width="0.5"/>
</g>
<!-- globe -->
<g>
<circle cx="565.6" cy="114.5" r="3.85" fill="#3d9ae0" stroke="none"/>
<path d="M563.6 110 A5.3 5.3 0 0 0 568.4 119.2" stroke="#555" stroke-width="1.1"/>
<path d="M561.4 120.8 H568.6" stroke="#6a6a6a" stroke-width="1.1"/>
<path d="M565 119.6 V120.6" stroke="#6a6a6a" stroke-width="1"/>
<path d="M563.6 113.6 l1.2 -0.8 l0.8 0.9 l-0.9 1.2 z M566.6 114.6 l1.1 0.2 l-0.3 1.3 l-0.9 0.2 z" fill="#d8ecfa" stroke="none"/>
</g>
<!-- list chevrons -->
<path d="M23.3 232.2 L26.8 235.4 L23.3 238.6" stroke="#3b3a39" stroke-width="1.15"/>
<path d="M20.9 252.9 L24 255.9 L27.1 252.9" stroke="#3b3a39" stroke-width="1.15"/>
<path d="M20.9 289.5 L24 292.5 L27.1 289.5" stroke="#3b3a39" stroke-width="1.15"/>
<!-- resource checkboxes -->
<g>
<rect x="19.4" y="302.9" width="11.2" height="10.9" fill="#fff" stroke="#5a5a5a" stroke-width="1" stroke-linejoin="miter"/>
<path d="M21.3 308.7 L23.9 311.1 L29 305.9" stroke="#56b576" stroke-width="1.05"/>
<circle cx="38.8" cy="307.8" r="3.3" stroke="#b6c6d3" stroke-width="0.9" fill="#fff"/>
</g>
<g transform="translate(0,18.1)">
<rect x="19.4" y="302.9" width="11.2" height="10.9" fill="#fff" stroke="#5a5a5a" stroke-width="1" stroke-linejoin="miter"/>
<path d="M21.3 308.7 L23.9 311.1 L29 305.9" stroke="#56b576" stroke-width="1.05"/>
<circle cx="38.8" cy="307.8" r="3.3" stroke="#b6c6d3" stroke-width="0.9" fill="#fff"/>
</g>
<g transform="translate(0,36.2)">
<rect x="19.4" y="302.9" width="11.2" height="10.9" fill="#fff" stroke="#5a5a5a" stroke-width="1" stroke-linejoin="miter"/>
<path d="M21.3 308.7 L23.9 311.1 L29 305.9" stroke="#56b576" stroke-width="1.05"/>
<circle cx="38.8" cy="307.8" r="3.3" stroke="#b6c6d3" stroke-width="0.9" fill="#fff"/>
</g>
</svg>

<div class="a" id="clip13" style="left:995.3px;top:190px;width:12.7px;height:16px;overflow:hidden"><span class="t tc" style="left:0.3px;top:4.35px;font-size:8.8px;color:#4a4a4e;transform:scaleX(0.877)">13:00</span></div>

<span class="t r" id="t0" style="left:155.2px;top:6.74px;font-size:9.4px;font-weight:400;color:#c3c0bd;transform:scaleX(0.9003);">Sans titre  -  Réunion</span>
<span class="t r" id="t1" style="left:415.4px;top:6.40px;font-size:9.8px;font-weight:400;color:#c1bfbd;transform:scaleX(0.9400);">Rechercher</span>
<span class="t r" id="t2" style="left:2.5px;top:34.87px;font-size:9.6px;font-weight:400;color:#2b2a29;transform:scaleX(0.9133);">Fichier</span>
<span class="t r" id="t3" style="left:43.7px;top:34.87px;font-size:9.6px;font-weight:400;color:#2b2a29;transform:scaleX(0.9315);">Réunion</span>
<span class="t b" id="t4" style="left:93.2px;top:34.87px;font-size:9.6px;font-weight:700;color:#1f1e1d;transform:scaleX(0.9311);">Assistant Planification</span>
<span class="t r" id="t5" style="left:205px;top:34.87px;font-size:9.6px;font-weight:400;color:#2b2a29;transform:scaleX(0.9865);">Insertion</span>
<span class="t r" id="t6" style="left:258.5px;top:34.87px;font-size:9.6px;font-weight:400;color:#2b2a29;transform:scaleX(1.0121);">Format du texte</span>
<span class="t r" id="t7" style="left:344px;top:34.87px;font-size:9.6px;font-weight:400;color:#2b2a29;transform:scaleX(0.9376);">Révision</span>
<span class="t r" id="t8" style="left:394px;top:34.87px;font-size:9.6px;font-weight:400;color:#2b2a29;transform:scaleX(0.9373);">Aide</span>
<span class="t r" id="t9" style="left:31.2px;top:63.30px;font-size:9.8px;font-weight:400;color:#262524;transform:scaleX(0.9862);">Actualiser la disponibilité</span>
<span class="t r" id="t10" style="left:170.5px;top:63.30px;font-size:9.8px;font-weight:400;color:#262524;transform:scaleX(0.9685);">Sélection automatique</span>
<span class="t r" id="t11" style="left:311px;top:63.30px;font-size:9.8px;font-weight:400;color:#262524;transform:scaleX(0.9893);">Ajouter des participants</span>
<span class="t r" id="t12" style="left:445.2px;top:63.30px;font-size:9.8px;font-weight:400;color:#262524;transform:scaleX(0.9777);">Ajouter des salles</span>
<span class="t r" id="t13" style="left:553.7px;top:63.30px;font-size:9.8px;font-weight:400;color:#262524;transform:scaleX(0.9490);">Recherche de salle</span>
<span class="t r" id="t14" style="left:670.7px;top:63.30px;font-size:9.8px;font-weight:400;color:#262524;transform:scaleX(0.9862);">Options</span>
<span class="t r" id="t15" style="left:22.5px;top:137.04px;font-size:9.4px;font-weight:400;color:#2b2a29;transform:scaleX(0.8865);">Envoyer</span>
<span class="t r" id="t16" style="left:160.5px;top:110.34px;font-size:9.4px;font-weight:400;color:#5f5d5b;transform:scaleX(0.9205);">Heure de début</span>
<span class="t r" id="t17" style="left:160.5px;top:134.04px;font-size:9.4px;font-weight:400;color:#5f5d5b;transform:scaleX(0.9202);">Heure de fin</span>
<span class="t r" id="t18" style="left:245.7px;top:108.62px;font-size:9.9px;font-weight:400;color:#1b1a19;transform:scaleX(0.8729);">mar. 04/02/2025</span>
<span class="t r" id="t19" style="left:245.7px;top:132.32px;font-size:9.9px;font-weight:400;color:#1b1a19;transform:scaleX(0.8729);">mar. 04/02/2025</span>
<span class="t r" id="t20" style="left:360.3px;top:108.53px;font-size:10px;font-weight:400;color:#1b1a19;transform:scaleX(0.7870);">10:00</span>
<span class="t r" id="t21" style="left:360.3px;top:132.23px;font-size:10px;font-weight:400;color:#1b1a19;transform:scaleX(0.7870);">10:30</span>
<span class="t r" id="t22" style="left:460px;top:110.14px;font-size:9.4px;font-weight:400;color:#2b2a29;transform:scaleX(0.9024);">Journée entière</span>
<span class="t r" id="t23" style="left:573.2px;top:110.14px;font-size:9.4px;font-weight:400;color:#2b2a29;transform:scaleX(0.8808);">Fuseaux horaires</span>
<span class="t r" id="t24" style="left:461.2px;top:134.04px;font-size:9.4px;font-weight:400;color:#2b7cd3;transform:scaleX(0.9243);">Rendre périodique</span>
<span class="t b" id="t25" style="left:380.4px;top:174.94px;font-size:8.7px;font-weight:700;color:#323130;transform:scaleX(0.9223);">lundi 3 février 2025</span>
<span class="t b" id="t26" style="left:775.5px;top:174.94px;font-size:8.7px;font-weight:700;color:#323130;transform:scaleX(0.9090);">mardi 4 février 2025</span>
<span class="t r" id="t27" style="left:161.8px;top:194.27px;font-size:8.9px;font-weight:400;color:#444448;transform:scaleX(0.8821);">12:00</span>
<span class="t r" id="t28" style="left:205.8px;top:194.27px;font-size:8.9px;font-weight:400;color:#444448;transform:scaleX(0.8821);">13:00</span>
<span class="t r" id="t29" style="left:249.8px;top:194.27px;font-size:8.9px;font-weight:400;color:#444448;transform:scaleX(0.8821);">14:00</span>
<span class="t r" id="t30" style="left:293.90000000000003px;top:194.27px;font-size:8.9px;font-weight:400;color:#444448;transform:scaleX(0.8821);">15:00</span>
<span class="t r" id="t31" style="left:338.0px;top:194.27px;font-size:8.9px;font-weight:400;color:#444448;transform:scaleX(0.8821);">16:00</span>
<span class="t r" id="t32" style="left:380.7px;top:194.27px;font-size:8.9px;font-weight:400;color:#444448;transform:scaleX(0.8821);">08:00</span>
<span class="t r" id="t33" style="left:424.7px;top:194.27px;font-size:8.9px;font-weight:400;color:#444448;transform:scaleX(0.8821);">09:00</span>
<span class="t r" id="t34" style="left:468.7px;top:194.27px;font-size:8.9px;font-weight:400;color:#444448;transform:scaleX(0.8821);">10:00</span>
<span class="t r" id="t35" style="left:512.6999999999999px;top:194.27px;font-size:8.9px;font-weight:400;color:#444448;transform:scaleX(0.9090);">11:00</span>
<span class="t r" id="t36" style="left:556.6999999999999px;top:194.27px;font-size:8.9px;font-weight:400;color:#444448;transform:scaleX(0.8821);">12:00</span>
<span class="t r" id="t37" style="left:600.6999999999999px;top:194.27px;font-size:8.9px;font-weight:400;color:#444448;transform:scaleX(0.8821);">13:00</span>
<span class="t r" id="t38" style="left:644.6999999999999px;top:194.27px;font-size:8.9px;font-weight:400;color:#444448;transform:scaleX(0.8821);">14:00</span>
<span class="t r" id="t39" style="left:688.6999999999999px;top:194.27px;font-size:8.9px;font-weight:400;color:#444448;transform:scaleX(0.8821);">15:00</span>
<span class="t r" id="t40" style="left:732.6999999999999px;top:194.27px;font-size:8.9px;font-weight:400;color:#444448;transform:scaleX(0.8821);">16:00</span>
<span class="t r" id="t41" style="left:775.8px;top:194.27px;font-size:8.9px;font-weight:400;color:#444448;transform:scaleX(0.8821);">08:00</span>
<span class="t r" id="t42" style="left:819.8px;top:194.27px;font-size:8.9px;font-weight:400;color:#444448;transform:scaleX(0.8821);">09:00</span>
<span class="t r" id="t43" style="left:863.8px;top:194.27px;font-size:8.9px;font-weight:400;color:#444448;transform:scaleX(0.8821);">10:00</span>
<span class="t r" id="t44" style="left:907.8px;top:194.27px;font-size:8.9px;font-weight:400;color:#444448;transform:scaleX(0.9090);">11:00</span>
<span class="t r" id="t45" style="left:951.8px;top:194.27px;font-size:8.9px;font-weight:400;color:#444448;transform:scaleX(0.8821);">12:00</span>
<span class="t b" id="t46" style="left:36.7px;top:213.35px;font-size:8.8px;font-weight:700;color:#3b3a39;transform:scaleX(0.8839);">Tous les participants</span>
<span class="t b" id="t47" style="left:35.2px;top:231.25px;font-size:8.8px;font-weight:700;color:#000000;transform:scaleX(0.9131);">Participant obligatoire</span>
<span class="t b" id="t48" style="left:35.2px;top:249.45px;font-size:8.8px;font-weight:700;color:#000000;transform:scaleX(0.9045);">Participant facultatif</span>
<span class="t r" id="t49" style="left:35.2px;top:268.35px;font-size:8.8px;font-weight:400;color:#75736f;transform:scaleX(1.0064);">Ajouter un participant facultatif</span>
<span class="t b" id="t50" style="left:35.2px;top:285.95px;font-size:8.8px;font-weight:700;color:#000000;transform:scaleX(0.8868);">Ressource (salle ou matériel)</span>
<span class="t r" id="t51" style="left:45.3px;top:304.25px;font-size:8.8px;font-weight:400;color:#3b3a39;transform:scaleX(0.9415);text-decoration:underline;">Clio Blanche</span>
<span class="t r" id="t52" style="left:45.3px;top:322.45px;font-size:8.8px;font-weight:400;color:#3b3a39;transform:scaleX(0.9937);text-decoration:underline;">Twingo</span>
<span class="t r" id="t53" style="left:45.3px;top:340.65px;font-size:8.8px;font-weight:400;color:#3b3a39;transform:scaleX(0.9650);text-decoration:underline;">Vélo déplacement pro</span>
<span class="t r" id="t54" style="left:35.2px;top:358.95px;font-size:8.8px;font-weight:400;color:#75736f;transform:scaleX(0.9528);">Ajouter une ressource</span>
<span class="t r" id="t55" style="left:628.7px;top:304.45px;font-size:8.8px;font-weight:400;color:#2b2a29;transform:scaleX(0.9848);">petroff saillans</span>
<span class="t r" id="t56" style="left:584.3px;top:322.75px;font-size:8.8px;font-weight:400;color:#2b2a29;transform:scaleX(0.8990);">RB - VAD</span>
</body></html>
